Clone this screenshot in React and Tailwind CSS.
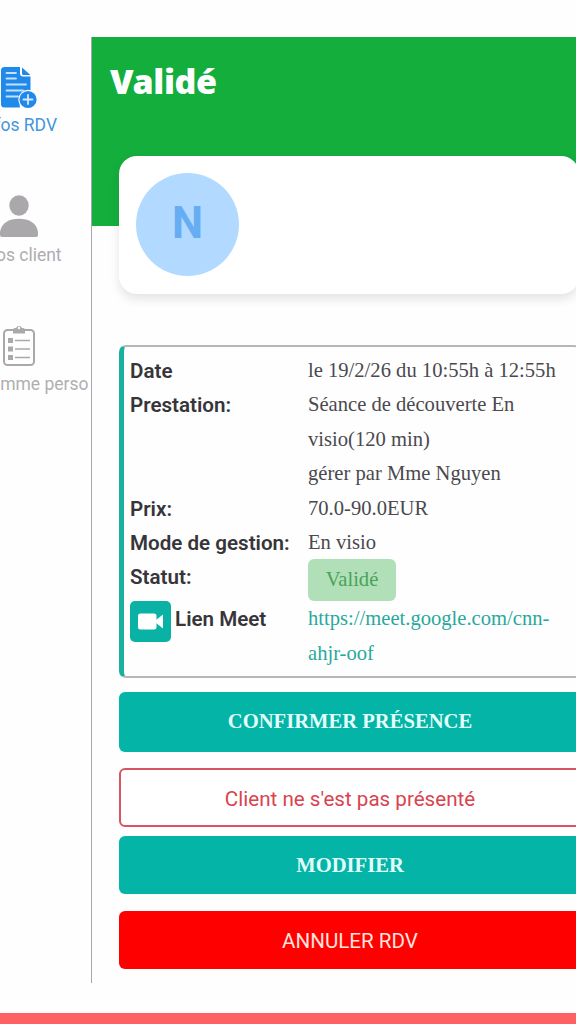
function FileIcon() {
  return (
    <svg width="38" height="44" viewBox="0 0 38 44" className="block">
      <path d="M4.500 2H20v6.500a3 3 0 0 0 3 3h7.500v19a9.500 9.500 0 0 0-10.500 12H4.500A3.500 3.500 0 0 1 1 39V5.500A3.500 3.500 0 0 1 4.500 2z" fill="#2189ea" />
      <path d="M22 2.500l8.500 7.500h-7a1.500 1.500 0 0 1-1.500-1.500z" fill="#2189ea" />
      <path d="M6.500 8H16M6.500 13.500H16M6.500 19.500H26M6.500 25.500H23M6.500 31.500H18" stroke="#c3e1fb" strokeWidth="1.800" strokeLinecap="round" fill="none" />
      <circle cx="28" cy="34.500" r="9.700" fill="#fff" />
      <circle cx="28" cy="34.500" r="8.600" fill="#2189ea" />
      <path d="M28 30v9M23.500 34.500h9" stroke="#d6ebfd" strokeWidth="1.800" strokeLinecap="round" />
    </svg>
  );
}

function PersonIcon() {
  return (
    <svg width="40" height="44" viewBox="0 0 40 44" className="block">
      <ellipse cx="20" cy="10.500" rx="9.700" ry="10.300" fill="#aaa8aa" />
      <path d="M1 40V37C2.500 28 10 23.800 20 23.800s17.500 4.200 19 13.200v3a2 2 0 0 1-2 2H3a2 2 0 0 1-2-2z" fill="#aaa8aa" />
    </svg>
  );
}

function ClipboardIcon() {
  return (
    <svg width="34" height="44" viewBox="0 0 34 44" className="block">
      <rect x="2" y="6" width="30" height="35" rx="3.500" fill="none" stroke="#aaa8ab" strokeWidth="2" />
      <path d="M11 9.500V6a2 2 0 0 1 2-2h1a3.200 3.200 0 0 1 6 0h1a2 2 0 0 1 2 2v3.500z" fill="#aaa8ab" />
      <circle cx="17" cy="4" r="1.200" fill="#fff" />
      <path d="M6 14h5v5H6zM6 22.500h5v5H6zM6 31h5v5H6z" fill="#aaa8ab" />
      <path d="M13 16.500h15M13 25h15M13 33.500h15" stroke="#aaa8ab" strokeWidth="1.500" />
    </svg>
  );
}

function CameraIcon() {
  return (
    <svg width="26" height="17" viewBox="0 0 26 17" className="block">
      <rect x="0" y="0.500" width="18.500" height="16" rx="2.500" fill="#fff" />
      <path d="M18 7l7-5.500v14L18 10z" fill="#fff" />
    </svg>
  );
}

function NavItem({ icon, label, className }) {
  return (
    <div className={"flex flex-col items-center whitespace-nowrap text-[17.5px] leading-5 " + className}>
      <div className="h-[44px]">{icon}</div>
      <span className="mt-[6px]">{label}</span>
    </div>
  );
}

function Row({ label, children }) {
  return (
    <div className="flex">
      <div className="-mb-px w-[178px] shrink-0 pt-px font-['Roboto',sans-serif] font-semibold text-[#373539]">{label}</div>
      <div className="min-w-0 flex-1">{children}</div>
    </div>
  );
}

export default function App() {
  return (
    <div className="flex h-[1024px] w-[576px] flex-col overflow-hidden bg-[#fefefe] pt-[37px] font-['Roboto',sans-serif]">
      <div className="flex h-[946px]">
        <nav className="w-[91px] shrink-0 overflow-hidden">
          <div className="-ml-[55px] flex w-[147px] flex-col pt-[28px]">
            <NavItem icon={<FileIcon />} label="Infos RDV" className="text-[#4596dc]" />
            <NavItem icon={<PersonIcon />} label="Infos client" className="mt-[60px] text-[#aeacaf]" />
            <NavItem icon={<ClipboardIcon />} label="Programme perso" className="mt-[59px] text-[#b0aeb1]" />
          </div>
        </nav>
        <main className="w-[490px] shrink-0 border-l border-[#aaa7ac]">
          <header className="h-[189px] bg-[#14ae3d] px-[18px] pt-[20px]">
            <h1 className="h-[48px] font-['Noto_Sans',sans-serif] text-[34px] leading-[48px] font-black tracking-[-0.4px] text-white">Validé</h1>
          </header>
          <div className="pl-[27px]">
            <section className="relative -mt-[70px] mr-[2px] h-[138px] rounded-[18px] bg-white p-[17px] shadow-[0_5px_10px_rgba(60,50,70,0.13)]">
              <div className="flex h-[103px] w-[103px] items-center justify-center rounded-full bg-[#b2d9ff] pb-[3px] text-[44px] font-bold text-[#66adf3]">N</div>
            </section>
            <section className="mt-[51px] h-[333px] rounded-[7px] border-y-2 border-l-[5px] border-y-[#b9b6ba] border-l-[#1baf9f] pt-[6px] pl-[6px] font-['Liberation_Serif',serif] text-[20.6px] leading-[34.4px] text-[#4b494e]">
              <Row label="Date">le 19/2/26 du 10:55h à 12:55h</Row>
              <Row label="Prestation:">Séance de découverte En<br />visio(120 min)<br />gérer par Mme Nguyen</Row>
              <Row label="Prix:">70.0-90.0EUR</Row>
              <Row label="Mode de gestion:">En visio</Row>
              <Row label="Statut:">
                <div className="h-[42px] w-[88px] rounded-[6px] bg-[#b1dfb7] text-center leading-[41px] text-[#48a35c]">Validé</div>
              </Row>
              <div className="flex">
                <div className="flex w-[178px] shrink-0 items-start">
                  <div className="flex h-[41px] w-[41px] items-center justify-center rounded-[5px] bg-[#09b2a4]"><CameraIcon /></div>
                  <span className="ml-[4px] pt-px font-['Roboto',sans-serif] font-semibold text-[#373539]">Lien Meet</span>
                </div>
                <a className="text-[#28a99c]">https://meet.google.com/cnn-<br />ahjr-oof</a>
              </div>
            </section>
            <div className="mt-[14px] flex flex-col text-center text-[20.6px]">
              <button className="h-[60px] rounded-[6px] bg-[#03b4a7] pb-[2px] font-['Liberation_Serif',serif] font-bold text-[#e2fffb]">CONFIRMER PRÉSENCE</button>
              <button className="mt-[16px] h-[59px] rounded-[6px] border-2 border-[#d75560] bg-white pt-[3px] text-[#d9434f]">Client ne s'est pas présenté</button>
              <button className="mt-[9px] h-[58px] rounded-[6px] bg-[#03b4a7] font-['Liberation_Serif',serif] font-bold text-[#e2fffb]">MODIFIER</button>
              <button className="mt-[17px] h-[58px] rounded-[6px] bg-[#ff0000] pt-[3px] text-[#ffe4df]">ANNULER RDV</button>
            </div>
          </div>
        </main>
      </div>
      <div className="mt-[30px] h-[11px] shrink-0 bg-[#ff6163]" />
    </div>
  );
}
